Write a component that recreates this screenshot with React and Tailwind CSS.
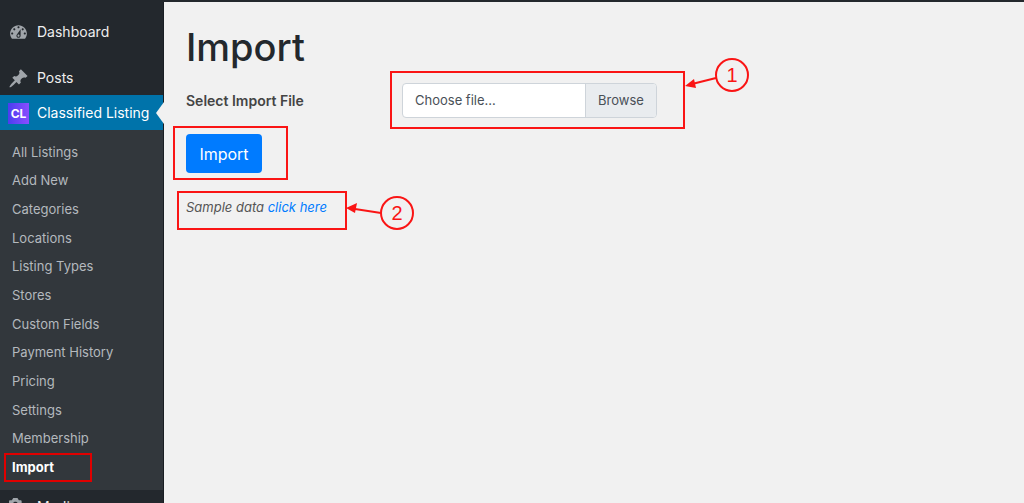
import { useState } from "react";

const RED_BOX = "pointer-events-none absolute border-2 border-[#fa1515]";

const submenu = [
    "All Listings",
    "Add New",
    "Categories",
    "Locations",
    "Listing Types",
    "Stores",
    "Custom Fields",
    "Payment History",
    "Pricing",
    "Settings",
    "Membership",
    "Import",
];

const icons = {
    dashboard:
        "M3.76 16h12.48c1.1-1.37 1.76-3.11 1.76-5 0-4.42-3.58-8-8-8s-8 3.58-8 8c0 1.89.66 3.63 1.76 5zM10 4c.55 0 1 .45 1 1s-.45 1-1 1-1-.45-1-1 .45-1 1-1zM6 6c.55 0 1 .45 1 1s-.45 1-1 1-1-.45-1-1 .45-1 1-1zm8 0c.55 0 1 .45 1 1s-.45 1-1 1-1-.45-1-1 .45-1 1-1zm-5.37 5.55L12 7v6c0 1.1-.9 2-2 2s-2-.9-2-2c0-.57.24-1.08.63-1.45zM4 10c.55 0 1 .45 1 1s-.45 1-1 1-1-.45-1-1 .45-1 1-1zm12 0c.55 0 1 .45 1 1s-.45 1-1 1-1-.45-1-1 .45-1 1-1zm-5 3c0-.55-.45-1-1-1s-1 .45-1 1 .45 1 1 1 1-.45 1-1z",
    pin: "M10.44 3.02l1.82-1.82 6.36 6.35-1.83 1.82c-1.05-.68-2.48-.57-3.41.36l-.75.75c-.92.93-1.04 2.35-.35 3.41l-1.83 1.82-2.41-2.41-2.8 2.79c-.42.42-3.38 2.71-3.8 2.29s1.86-3.39 2.28-3.81l2.79-2.79L4.1 9.36l1.83-1.82c1.05.69 2.48.57 3.4-.36l.75-.75c.93-.92 1.05-2.35.36-3.41z",
    media: "M13 11V4c0-.55-.45-1-1-1h-1.67L9 1H5L3.67 3H2c-.55 0-1 .45-1 1v7c0 .55.45 1 1 1h10c.55 0 1-.45 1-1zM7 4.5c1.38 0 2.5 1.12 2.5 2.5S8.38 9.5 7 9.5 4.5 8.38 4.5 7 5.62 4.5 7 4.5zM14 6h5v10.5c0 1.38-1.12 2.5-2.5 2.5S14 17.88 14 16.5s1.12-2.5 2.5-2.5c.17 0 .34.02.5.05V9h-3V6zm-4 8.05V13h2v3.5c0 1.38-1.12 2.5-2.5 2.5S7 17.88 7 16.5 8.12 14 9.5 14c.17 0 .34.02.5.05z",
};

const MenuItem = ({ icon, children }) => (
    <a href="#" className="flex h-[34px] items-center gap-2 pl-2 text-sm text-[#eeeeee]">
        <svg viewBox="0 0 20 20" className="h-[21px] w-[21px] shrink-0 fill-[#a0a5aa]" aria-hidden="true">
            <path d={icons[icon]} />
        </svg>
        {children}
    </a>
);

const Sidebar = () => (
    <nav className="w-[164px] shrink-0 border-r border-[#191e23] bg-[#23282d] pt-[13px]">
        <MenuItem icon="dashboard">Dashboard</MenuItem>
        <div className="mt-3">
            <MenuItem icon="pin">Posts</MenuItem>
        </div>

        <a href="#" className="relative flex h-[35px] items-center gap-2 bg-[#0073aa] pl-2 text-sm text-white">
            <span className="mt-0.5 flex h-[21px] w-[21px] shrink-0 items-center justify-center bg-linear-to-r from-[#4a3df0] to-[#8a4dff] text-xs font-bold">
                CL
            </span>
            <span className="whitespace-nowrap">Classified Listing</span>
            <svg viewBox="0 0 8 22" className="absolute -right-px top-[7px] h-[22px] w-2 fill-[#f1f1f1]" aria-hidden="true">
                <path d="M8 0v22L0 11z" />
            </svg>
        </a>

        <ul className="grid auto-rows-fr h-[360px] bg-[#32373c] py-2 text-[13px] text-[#b4b9be]">
            {submenu.map((item) => (
                <li key={item} className="relative flex items-center pl-3">
                    {item === "Import" ? (
                        <>
                            <a href="#" className="font-bold text-white">
                                {item}
                            </a>
                            <span className="pointer-events-none absolute inset-y-0 left-1 w-[88px] border-2 border-[#e00000]" />
                        </>
                    ) : (
                        <a href="#">{item}</a>
                    )}
                </li>
            ))}
        </ul>

        <MenuItem icon="media">Media</MenuItem>
    </nav>
);

// numbered circle with an arrow pointing left at a red box
const Callout = ({ number, className, from, to, head }) => (
    <div className={`pointer-events-none absolute h-[36px] w-[66px] ${className}`}>
        <svg viewBox="0 0 66 36" className="h-full w-full overflow-visible" aria-hidden="true">
            <circle cx="48" cy="18" r="16" fill="none" stroke="#fa1515" strokeWidth="2" />
            <path d={`M${from}L${to}`} stroke="#fa1515" strokeWidth="2" />
            <path d={head} fill="#fa1515" />
        </svg>
        <span className="absolute inset-y-0 right-0 flex w-9 items-center justify-center font-[Liberation_Sans,sans-serif] text-xl not-italic text-[#fa1515]">
            {number}
        </span>
    </div>
);

const ImportForm = () => {
    const [fileName, setFileName] = useState("");

    return (
        <form onSubmit={(e) => e.preventDefault()}>
            <div className="flex items-center">
                <span className="w-[216px] text-sm font-semibold text-[#444444]">Select Import File</span>
                <div className="relative">
                    <input
                        id="import-file"
                        type="file"
                        className="sr-only"
                        onChange={(e) => setFileName(e.target.files[0]?.name || "")}
                    />
                    <label
                        htmlFor="import-file"
                        className="flex h-[35px] w-[255px] overflow-hidden rounded border border-[#ced4da] bg-white text-[13px] text-[#495057]"
                    >
                        <span className="flex flex-1 items-center pl-3">{fileName || "Choose file..."}</span>
                        <span className="flex w-[71px] items-center justify-center border-l border-[#ced4da] bg-[#e9ecef]">
                            Browse
                        </span>
                    </label>
                    <div className={`${RED_BOX} -left-3 -top-3 h-[58px] w-[295px]`} />
                    <Callout
                        number="1"
                        className="-top-[26px] left-[282px]"
                        from="32 21"
                        to="8 27"
                        head="M1 29L10 22L12 31z"
                    />
                </div>
            </div>

            <div className="relative mt-4 w-fit">
                <button type="submit" className="h-[39px] w-[76px] rounded bg-[#007bff] text-base text-white">
                    Import
                </button>
                <div className={`${RED_BOX} -left-[13px] -top-2 h-[54px] w-[115px]`} />
            </div>
        </form>
    );
};

const App = () => (
    <div className="flex h-screen flex-col overflow-hidden bg-[#f1f1f1] font-[Inter,sans-serif]">
        <div className="h-0.5 shrink-0 bg-[#23282d]" />
        <div className="flex min-h-0 flex-1">
            <Sidebar />
            <main className="flex-1 pl-[22px] pt-[21px]">
                <h1 className="mb-3 text-[38px] font-medium leading-[48px] text-[#23282d]">Import</h1>
                <ImportForm />
                <div className="relative mt-6 w-fit text-[13px] italic leading-5 text-[#555555]">
                    Sample data{" "}
                    <a href="#" className="text-[#007bff]">
                        click here
                    </a>
                    <div className={`${RED_BOX} -left-[9px] -top-[6px] h-[39px] w-[170px]`} />
                    <Callout
                        number="2"
                        className="-top-[2px] left-[163px]"
                        from="32 18"
                        to="6 14"
                        head="M-3 13L8 8L6 18z"
                    />
                </div>
            </main>
        </div>
    </div>
);

export default App;
